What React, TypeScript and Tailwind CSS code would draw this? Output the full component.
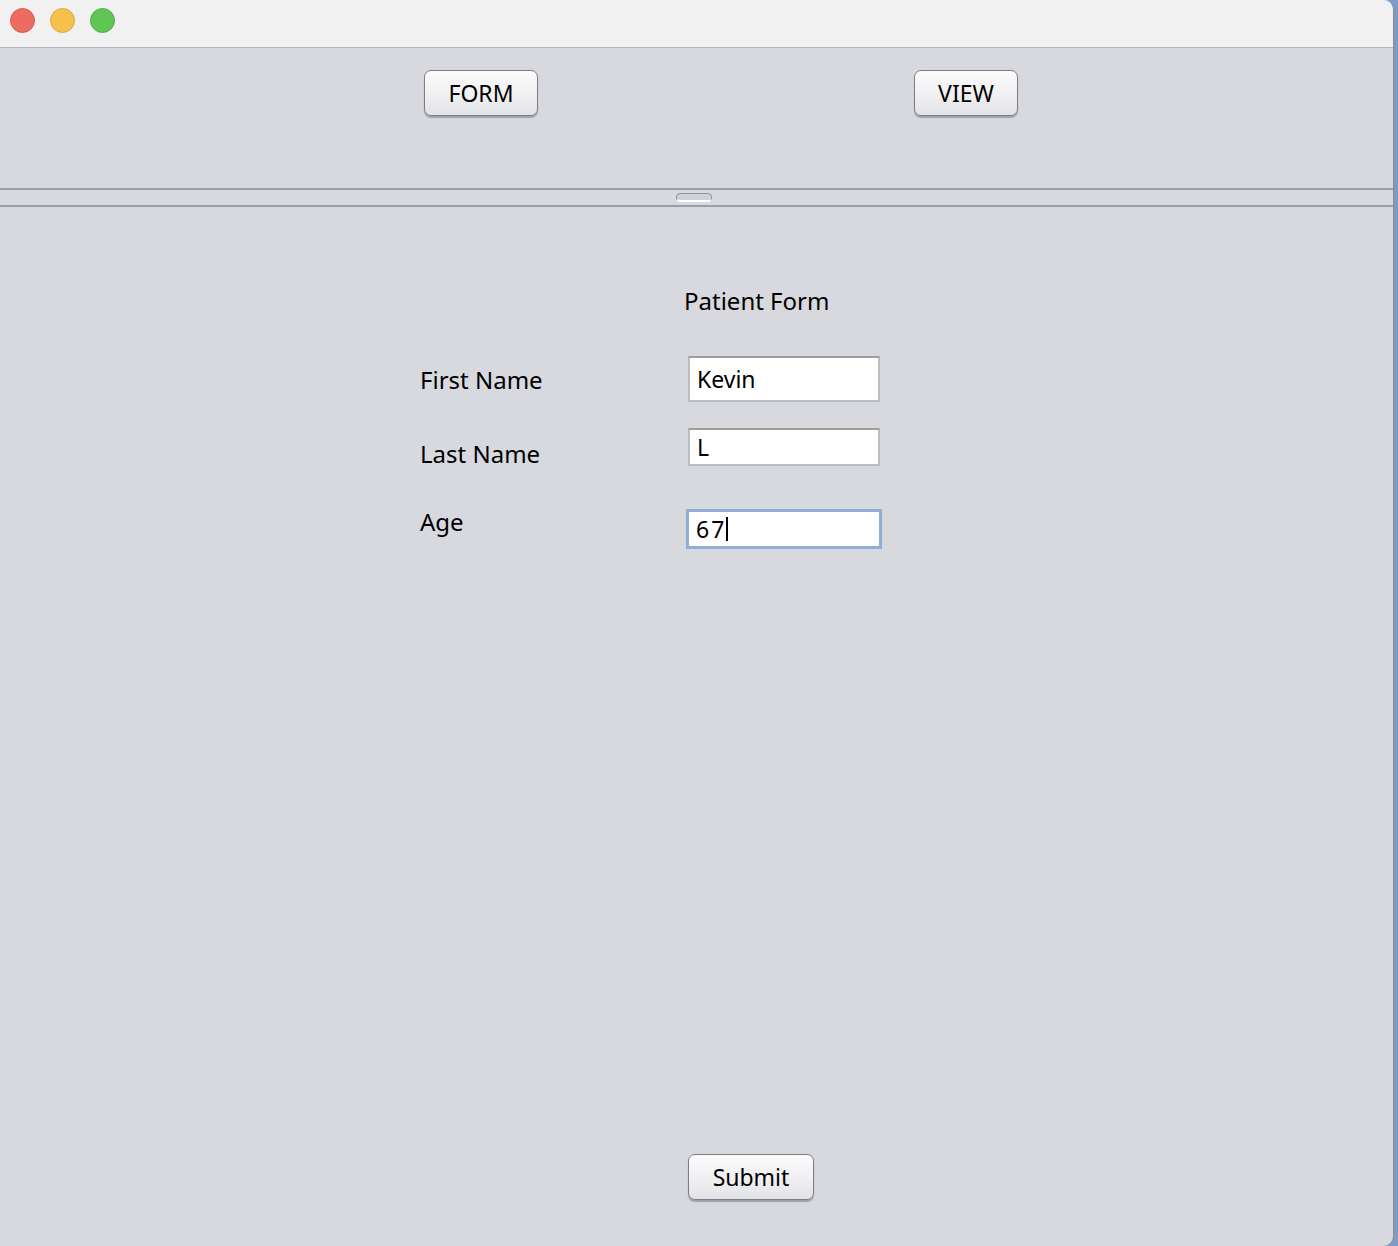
import React from "react";

const font = { fontFamily: '"Noto Sans", "Open Sans", "DejaVu Sans", sans-serif' };

function MacButton({ children, className = "" }: { children: React.ReactNode; className?: string }) {
  return (
    <button
      className={
        "h-[46px] rounded-[7px] border border-[#7d7e82] bg-gradient-to-b from-[#fbfbfc] via-[#f1f1f3] to-[#e2e3e7] text-[23px] text-black shadow-[0_2px_1px_rgba(0,0,0,0.25)] flex items-center justify-center " +
        className
      }
      style={font}
    >
      {children}
    </button>
  );
}

export default function App() {
  return (
    <div className="w-[1398px] h-[1246px] bg-[#7c9cc6] flex overflow-hidden" style={font}>
      <div className="w-[1394px] h-[1246px] bg-[#d8d9de] rounded-tr-[10px] rounded-br-[10px] flex flex-col overflow-hidden border-r border-[#8a8c92]">
        {/* title bar */}
        <div className="h-[48px] bg-[#f1f1f1] border-b border-[#b3b4b8] flex items-start gap-[15px] pl-[10px] pt-[8px] shrink-0">
          <div className="w-[25px] h-[25px] rounded-full bg-[#ee6b60] border border-[#d65a50]" />
          <div className="w-[25px] h-[25px] rounded-full bg-[#f6c04f] border border-[#dba73c]" />
          <div className="w-[25px] h-[25px] rounded-full bg-[#61c555] border border-[#4eae45]" />
        </div>
        {/* top panel */}
        <div className="h-[140px] shrink-0 flex items-start pt-[22px]">
          <MacButton className="ml-[424px] w-[114px]">FORM</MacButton>
          <MacButton className="ml-[376px] w-[104px]">VIEW</MacButton>
        </div>
        {/* split divider */}
        <div className="h-[19px] shrink-0 border-t-2 border-b-2 border-[#9b9da3] bg-[#d9dadf] flex items-center pl-[676px]">
          <div className="w-[36px] h-[9px] rounded-full border border-[#8f9197] border-b-2 border-b-white bg-[#d0d1d6]" />
        </div>
        {/* form panel */}
        <div className="flex-1 flex flex-col">
          <div className="pl-[684px] pt-[80px] text-[24px] leading-[28px] text-black">Patient Form</div>
          <div className="flex items-center mt-[41px] h-[46px]">
            <div className="w-[268px] pl-[420px] box-content text-[24px] text-black pt-[2px]">First Name</div>
            <div className="w-[192px] h-[46px] bg-white border-2 border-[#bdbdbd] border-t-[#9d9d9d] flex items-center pl-[7px] text-[23px]">
              Kevin
            </div>
          </div>
          <div className="flex items-center mt-[26px] h-[38px]">
            <div className="pl-[420px] w-[688px] text-[24px] text-black pt-[13px]">Last Name</div>
            <div className="w-[192px] h-[38px] bg-white border-2 border-[#bdbdbd] border-t-[#9d9d9d] flex items-center pl-[7px] text-[23px]">
              L
            </div>
          </div>
          <div className="flex items-start mt-[43px] h-[40px]">
            <div className="pl-[420px] w-[686px] text-[24px] text-black -mt-[5px]">Age</div>
            <div className="w-[196px] h-[40px] bg-white border-[3px] border-[#8eaed8] flex items-center pl-[7px] text-[23px] tracking-[2px]">
              67<span className="inline-block w-[2px] h-[24px] bg-black ml-[0px]" />
            </div>
          </div>
          <div className="flex-1" />
          <div className="pl-[688px] pb-[46px]">
            <MacButton className="w-[126px]">Submit</MacButton>
          </div>
        </div>
      </div>
    </div>
  );
}
